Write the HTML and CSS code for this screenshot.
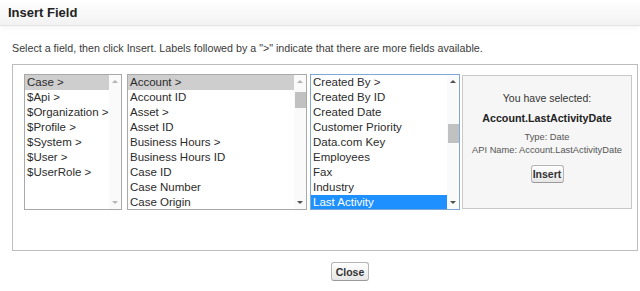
FILE: index.html
```html
<html lang="en">
<head>
    <meta charset="UTF-8">
    <meta name="viewport" content="width=device-width, initial-scale=1.0">
    <title>Insert Field</title>
    <link rel="stylesheet" href="styles.css">
</head>
<body>
    <div class="dialog">
        <div class="dialog-header">
            <h2>Insert Field</h2>
        </div>
        <p class="hint">Select a field, then click Insert. Labels followed by a "&gt;" indicate that there are more fields available.</p>

        <div class="picker">
            <!-- first level: objects -->
            <div class="listbox col-objects">
                <ul class="options">
                    <li class="picked">Case &gt;</li>
                    <li>$Api &gt;</li>
                    <li>$Organization &gt;</li>
                    <li>$Profile &gt;</li>
                    <li>$System &gt;</li>
                    <li>$User &gt;</li>
                    <li>$UserRole &gt;</li>
                </ul>
                <div class="scrollbar">
                    <span class="arrow up off"></span>
                    <div class="track"></div>
                    <span class="arrow down off"></span>
                </div>
            </div>

            <!-- second level: Case fields -->
            <div class="listbox col-case">
                <ul class="options">
                    <li class="picked">Account &gt;</li>
                    <li>Account ID</li>
                    <li>Asset &gt;</li>
                    <li>Asset ID</li>
                    <li>Business Hours &gt;</li>
                    <li>Business Hours ID</li>
                    <li>Case ID</li>
                    <li>Case Number</li>
                    <li>Case Origin</li>
                </ul>
                <div class="scrollbar">
                    <span class="arrow up off"></span>
                    <div class="track"><div class="thumb"></div></div>
                    <span class="arrow down"></span>
                </div>
            </div>

            <!-- third level: Account fields -->
            <div class="listbox col-account focused">
                <ul class="options">
                    <li>Created By &gt;</li>
                    <li>Created By ID</li>
                    <li>Created Date</li>
                    <li>Customer Priority</li>
                    <li>Data.com Key</li>
                    <li>Employees</li>
                    <li>Fax</li>
                    <li>Industry</li>
                    <li class="active">Last Activity</li>
                </ul>
                <div class="scrollbar">
                    <span class="arrow up"></span>
                    <div class="track"><div class="thumb"></div></div>
                    <span class="arrow down"></span>
                </div>
            </div>

            <div class="summary">
                <span class="summary-title">You have selected:</span>
                <span class="summary-field">Account.LastActivityDate</span>
                <span class="summary-meta">Type: Date</span>
                <span class="summary-meta">API Name: Account.LastActivityDate</span>
                <button class="btn btn-insert">Insert</button>
            </div>
        </div>

        <div class="dialog-footer">
            <button class="btn btn-close">Close</button>
        </div>
    </div>
</body>
</html>
```

FILE: styles.css
```css
body {
    margin: 0;
    background-color: white;
    font-family: "Liberation Sans", Arial, sans-serif;
    color: #333;
}

.dialog {
    width: 640px;
}

.dialog-header {
    height: 25px;
    border-bottom: 1px solid #e2e2e2;
    background: linear-gradient(#ffffff, #f2f2f2);
    box-shadow: 0 3px 6px rgba(0, 0, 0, 0.03);
    display: flex;
    align-items: center;
    padding-left: 8px;
}

.dialog-header h2 {
    margin: 0;
    font-size: 13px;
    font-weight: bold;
    color: #222;
}

.hint {
    margin: 15px 0 0 12px;
    font-size: 10.7px;
    line-height: 14px;
    color: #3a3a3a;
}

.picker {
    margin: 9px 2px 0 12px;
    border: 1px solid #bdbdbd;
    padding: 9px 5px 40px 11px;
    display: flex;
    align-items: flex-start;
}

/* fake select boxes */
.listbox {
    height: 134px;
    border: 1px solid #a9a9a9;
    background-color: white;
    display: flex;
    overflow: hidden;
}

.listbox.focused {
    border-color: #7fa7d6;
}

.col-objects {
    width: 96px;
    margin-right: 5px;
}

.col-case {
    width: 178px;
    margin-right: 3px;
}

.col-account {
    width: 148px;
    margin-right: 2px;
}

.options {
    flex: 1;
    margin: 0;
    padding: 0;
    list-style-type: none;
}

.options li {
    height: 15px;
    line-height: 15px;
    padding-left: 2px;
    font-size: 11.5px;
    color: #2b2b2b;
    white-space: nowrap;
    overflow: hidden;
}

.options li.picked {
    background-color: #cecece;
}

.options li.active {
    background-color: #1e90ff;
    color: white;
}

.scrollbar {
    width: 12px;
    display: flex;
    flex-direction: column;
    align-items: center;
    background-color: #fafafa;
}

.scrollbar .track {
    flex: 1;
    width: 100%;
}

.scrollbar .thumb {
    width: 11px;
    margin: 0 auto;
    background-color: #c1c1c1;
}

.col-case .thumb {
    height: 16px;
    margin-top: 4px;
}

.col-account .thumb {
    height: 19px;
    margin-top: 36px;
}

.arrow {
    width: 0;
    height: 0;
    margin: 5px 0;
    border-left: 3px solid transparent;
    border-right: 3px solid transparent;
}

.arrow.up {
    border-bottom: 3px solid #505050;
}

.arrow.down {
    border-top: 3px solid #505050;
}

.arrow.up.off {
    border-bottom-color: #b4b4b4;
}

.arrow.down.off {
    border-top-color: #b4b4b4;
}

.summary {
    width: 168px;
    height: 132px;
    border: 1px solid #c8c8c8;
    background-color: #f6f6f6;
    display: flex;
    flex-direction: column;
    align-items: center;
    margin-top: 1px;
}

.summary-title {
    margin-top: 15px;
    font-size: 10.5px;
    line-height: 14px;
    color: #333;
}

.summary-field {
    margin-top: 6px;
    font-size: 10.7px;
    font-weight: bold;
    line-height: 14px;
    color: #222;
}

.summary-meta {
    font-size: 9.3px;
    line-height: 13px;
    color: #555;
}

.summary-title + .summary-field + .summary-meta {
    margin-top: 6px;
}

.btn {
    font-family: "Liberation Sans", Arial, sans-serif;
    font-size: 10.5px;
    font-weight: bold;
    color: #333;
    background: linear-gradient(#ffffff, #e6e6e6);
    border: 1px solid #b5b5b5;
    border-bottom-color: #9a9a9a;
    border-radius: 3px;
    padding: 0;
}

.btn-insert {
    width: 33px;
    height: 18px;
    margin-top: 8px;
}

.dialog-footer {
    display: flex;
    justify-content: center;
    padding-top: 11px;
    padding-left: 60px;
}

.btn-close {
    width: 38px;
    height: 19px;
}
```
